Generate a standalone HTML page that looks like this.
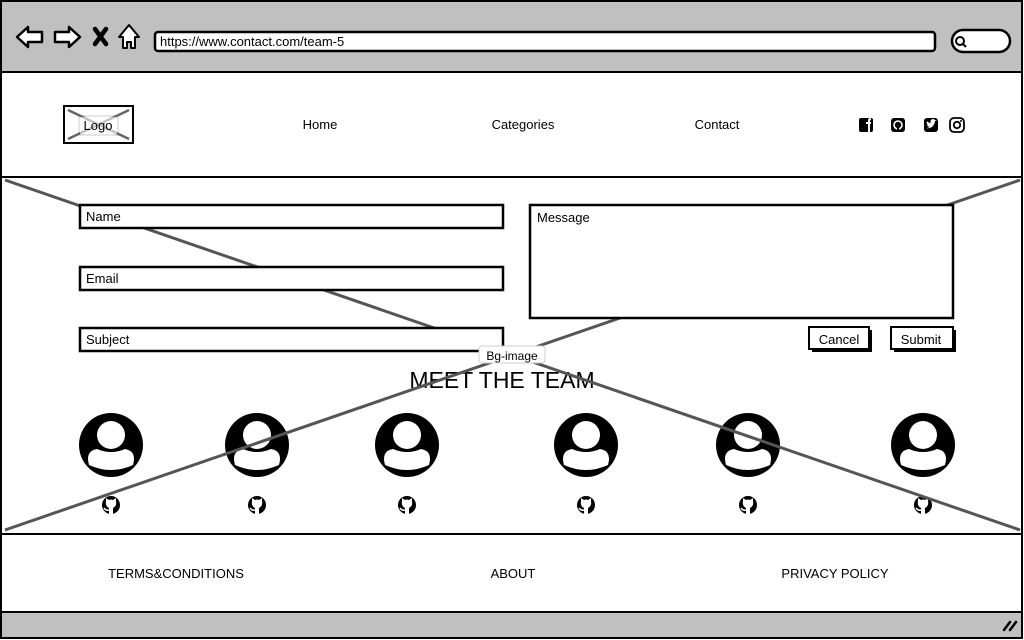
<!DOCTYPE html>
<html><head><meta charset="utf-8">
<style>
html,body{margin:0;padding:0;background:#fff;}
svg{display:block;font-family:"Liberation Sans",sans-serif;}
</style></head>
<body>
<svg width="1024" height="640" viewBox="0 0 1024 640" xmlns="http://www.w3.org/2000/svg">
<defs>
<g id="av">
<circle r="32" fill="#000"/>
<circle cy="-10" r="14" fill="#fff"/>
<path d="M-22,20 Q-26,6 -14,4 Q0,10 14,4 Q26,6 22,20 Q0,30 -22,20Z" fill="#fff"/>
</g>
<g id="gh">
<circle r="9" fill="#000"/>
<path d="M-5,-4 L-5,-7 L-2,-5 Q0,-6 2,-5 L5,-7 L5,-4 Q6,1 2,3 L2,9 L-2,9 L-2,3 Q-6,1 -5,-4Z" fill="#fff"/>
<path d="M-7,3 Q-5,6 -2,5" stroke="#fff" stroke-width="1.5" fill="none"/>
</g>
</defs>
<rect x="1" y="1" width="1021" height="637" fill="#fff" stroke="#000" stroke-width="2"/>
<rect x="2" y="2" width="1019" height="70" fill="#c0c0c0"/>
<line x1="2" y1="72" x2="1021" y2="72" stroke="#000" stroke-width="2"/>
<path d="M17,37 L28,27 L28,32 L42,32 L42,42 L28,42 L28,47Z" fill="#fff" stroke="#000" stroke-width="2.5" stroke-linejoin="round"/>
<path d="M80,37 L69,27 L69,32 L55,32 L55,42 L69,42 L69,47Z" fill="#fff" stroke="#000" stroke-width="2.5" stroke-linejoin="round"/>
<path d="M95,29 L106,44 M106,29 L95,44" stroke="#000" stroke-width="4.5" stroke-linecap="round"/>
<path d="M119,37 L129,25 L139,37 L135,37 L135,48 L131,48 L131,42 L127,42 L127,48 L123,48 L123,37Z" fill="#fff" stroke="#000" stroke-width="2" stroke-linejoin="round"/>
<rect x="155" y="32" width="780" height="19" rx="3" fill="#fff" stroke="#000" stroke-width="2.5"/>
<text x="160" y="46" font-size="13" fill="#000">https://www.contact.com/team-5</text>
<rect x="952" y="30" width="58" height="22" rx="11" fill="#fff" stroke="#000" stroke-width="2.5"/>
<circle cx="960" cy="41" r="4" fill="none" stroke="#000" stroke-width="2"/>
<line x1="963" y1="44" x2="966" y2="47" stroke="#000" stroke-width="2"/>
<rect x="64" y="106" width="69" height="37" fill="#fff" stroke="#000" stroke-width="2"/>
<rect x="79" y="116" width="39" height="19" fill="none" stroke="#ddd" stroke-width="1.5"/>
<path d="M68,110 L129,139 M68,139 L129,110" stroke="#666" stroke-width="2.5"/>
<rect x="80" y="117" width="37" height="17" fill="#fff" opacity=".6"/>
<text x="98" y="130" font-size="13" text-anchor="middle">Logo</text>
<text x="320" y="129" font-size="13" text-anchor="middle">Home</text>
<text x="523" y="129" font-size="13" text-anchor="middle">Categories</text>
<text x="717" y="129" font-size="13" text-anchor="middle">Contact</text>
<rect x="859" y="118" width="14" height="14" rx="2" fill="#000"/>
<path d="M868,132 L868,124 L866,124 L866,122 L868,122 L868,120 Q868,118 871,118 L871,120 Q870,120 870,121 L870,122 L871,122 L871,124 L870,124 L870,132Z" fill="#fff"/>
<rect x="891" y="118" width="14" height="14" rx="3" fill="#000"/>
<circle cx="898" cy="125" r="4" fill="none" stroke="#fff" stroke-width="1.6"/>
<rect x="897" y="127" width="2" height="4" fill="#000"/>
<rect x="924" y="118" width="14" height="14" rx="3" fill="#000"/>
<path d="M926,128 Q930,129 933,126 Q935,123 935,121 L937,120 L935,120 Q933,118 931,120 Q930,122 931,123 Q928,123 927,121 Q926,124 928,125 L927,125 Q928,127 930,127 Q928,128 926,128Z" fill="#fff"/>
<rect x="950" y="118" width="14" height="14" rx="4" fill="none" stroke="#000" stroke-width="1.8"/>
<circle cx="957" cy="125" r="3.2" fill="none" stroke="#000" stroke-width="1.8"/>
<circle cx="961" cy="121" r="1" fill="#000"/>
<line x1="2" y1="177" x2="1021" y2="177" stroke="#000" stroke-width="2"/>
<!-- team (under cross) -->
<text x="502" y="388" font-size="23" text-anchor="middle">MEET THE TEAM</text>
<use href="#av" x="111" y="445"/><use href="#av" x="257" y="445"/><use href="#av" x="407" y="445"/>
<use href="#av" x="586" y="445"/><use href="#av" x="748" y="445"/><use href="#av" x="923" y="445"/>
<use href="#gh" x="111" y="505"/><use href="#gh" x="257" y="505"/><use href="#gh" x="407" y="505"/>
<use href="#gh" x="586" y="505"/><use href="#gh" x="748" y="505"/><use href="#gh" x="923" y="505"/>
<path d="M5,180 L1020,530 M5,530 L1020,180" stroke="#555" stroke-width="3"/>
<g fill="#fff" stroke="#000" stroke-width="2.5">
<rect x="80" y="205" width="423" height="23"/>
<rect x="80" y="267" width="423" height="23"/>
<rect x="80" y="328" width="423" height="23"/>
<rect x="530" y="205" width="423" height="113"/>
</g>
<g font-size="13">
<text x="86" y="221">Name</text>
<text x="86" y="283">Email</text>
<text x="86" y="344">Subject</text>
<text x="537" y="222">Message</text>
</g>
<rect x="812" y="330" width="60" height="22" fill="#000"/>
<rect x="809" y="327" width="60" height="22" fill="#fff" stroke="#000" stroke-width="2"/>
<text x="839" y="344" font-size="13" text-anchor="middle">Cancel</text>
<rect x="894" y="330" width="62" height="22" fill="#000"/>
<rect x="891" y="327" width="62" height="22" fill="#fff" stroke="#000" stroke-width="2"/>
<text x="921" y="344" font-size="13" text-anchor="middle">Submit</text>
<rect x="479" y="346" width="66" height="17" rx="3" fill="#fff" stroke="#ccc"/>
<text x="512" y="360" font-size="12" text-anchor="middle">Bg-image</text>
<line x1="2" y1="534" x2="1021" y2="534" stroke="#000" stroke-width="2"/>
<g font-size="13" text-anchor="middle">
<text x="176" y="578">TERMS&amp;CONDITIONS</text>
<text x="513" y="578">ABOUT</text>
<text x="835" y="578">PRIVACY POLICY</text>
</g>
<rect x="2" y="612" width="1019" height="25" fill="#c0c0c0"/>
<line x1="2" y1="612" x2="1021" y2="612" stroke="#000" stroke-width="2"/>
<path d="M1004,630 L1010,622 M1010,630 L1016,622" stroke="#000" stroke-width="2.5" stroke-linecap="round"/>
<rect x="1" y="1" width="1021" height="637" fill="none" stroke="#000" stroke-width="2"/>
</svg>
</body></html>
